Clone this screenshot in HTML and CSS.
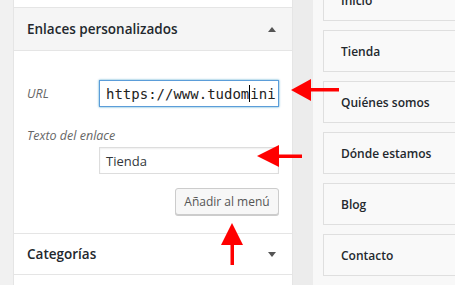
FILE: index.html
```html
<!DOCTYPE html>
<html lang="es">
<head>
    <meta charset="UTF-8">
    <meta name="viewport" content="width=device-width, initial-scale=1.0">
    <title>Menús</title>
    <link rel="stylesheet" href="styles.css">
</head>
<body>
    <div class="gutter"></div>

    <div class="panel">
        <div class="panel-top"></div>
        <div class="section-head open">
            <span>Enlaces personalizados</span>
            <span class="toggle up"></span>
        </div>
        <div class="section-body">
            <div class="field-row">
                <label class="field-label">URL</label>
                <div class="text-input focused mono">https://www.tudom<span class="caret"></span>ini</div>
            </div>
            <label class="field-label block">Texto del enlace</label>
            <div class="field-row">
                <span class="field-label"></span>
                <div class="text-input">Tienda</div>
            </div>
            <div class="actions">
                <button class="button">Añadir al menú</button>
            </div>
        </div>
        <div class="section-head">
            <span>Categorías</span>
            <span class="toggle down"></span>
        </div>
    </div>

    <div class="stripe"></div>

    <div class="menu">
        <div class="menu-item">Inicio</div>
        <div class="menu-item">Tienda</div>
        <div class="menu-item">Quiénes somos</div>
        <div class="menu-item">Dónde estamos</div>
        <div class="menu-item">Blog</div>
        <div class="menu-item">Contacto</div>
    </div>

    <!-- red arrows drawn on top of the screenshot -->
    <svg class="arrows" width="455" height="285" viewBox="0 0 455 285">
        <polygon points="291,90 311,79 311,101" fill="#f00"/>
        <rect x="310" y="88" width="29" height="3.5" fill="#f00"/>

        <polygon points="257,156 279,145 279,167" fill="#f00"/>
        <rect x="278" y="154.5" width="24" height="3.5" fill="#f00"/>

        <polygon points="232,223 221,245 243,245" fill="#f00"/>
        <rect x="230.5" y="244" width="3.5" height="21" fill="#f00"/>
    </svg>
</body>
</html>
```

FILE: styles.css
```css
body {
    margin: 0;
    width: 455px;
    height: 285px;
    overflow: hidden;
    display: flex;
    position: relative;
    font-family: "Open Sans", sans-serif;
    background-color: #f1f1f1;
    color: #23282d;
}
.gutter {
    width: 13px;
    background-color: #f1f1f1;
}
.panel {
    width: 278px;
    background: white;
    border-left: 1px solid #e5e5e5;
    border-right: 1px solid #e5e5e5;
}
.panel-top {
    height: 7px;
}
.section-head {
    height: 42px;
    display: flex;
    align-items: center;
    justify-content: space-between;
    padding: 0 16px 0 13px;
    font-size: 13.5px;
    font-weight: 600;
    border-top: 1px solid #e5e5e5;
    border-bottom: 1px solid #e5e5e5;
    background-color: white;
    box-sizing: border-box;
}
.section-head.open {
    background-color: #f5f5f5;
    height: 44px;
}
.toggle {
    width: 0;
    height: 0;
    border-left: 4px solid transparent;
    border-right: 4px solid transparent;
}
.toggle.up {
    border-bottom: 5px solid #555;
}
.toggle.down {
    border-top: 5px solid #555;
}
.section-body {
    padding: 29px 13px 17px 13px;
    height: 182px;
    box-sizing: border-box;
}
.field-row {
    display: flex;
    align-items: center;
}
.field-label {
    width: 72px;
    flex-shrink: 0;
    font-size: 12.5px;
    font-style: italic;
    color: #666;
}
.field-label.block {
    display: block;
    width: auto;
    margin: 21px 0 3px 0;
    line-height: 16px;
}
.text-input {
    width: 180px;
    height: 27px;
    box-sizing: border-box;
    border: 1px solid #ddd;
    box-shadow: inset 0 1px 2px rgba(0, 0, 0, 0.07);
    padding: 0 6px;
    display: flex;
    align-items: center;
    font-size: 13px;
    color: #32373c;
    white-space: nowrap;
    overflow: hidden;
}
.text-input.focused {
    border-color: #5b9dd9;
    box-shadow: 0 0 2px rgba(30, 140, 190, 0.8);
}
.text-input.mono {
    font-family: "DejaVu Sans Mono", monospace;
    font-size: 14px;
    color: #222;
}
.caret {
    display: inline-block;
    width: 0;
    height: 17px;
    border-left: 1px solid #000;
}
.actions {
    display: flex;
    justify-content: flex-end;
    margin-top: 14px;
}
.button {
    font-family: "Open Sans", sans-serif;
    font-size: 12px;
    color: #555;
    height: 27px;
    width: 104px;
    padding: 0;
    background-color: #f7f7f7;
    border: 1px solid #ccc;
    border-radius: 3px;
    box-shadow: 0 1px 0 #ccc;
    cursor: pointer;
}
.stripe {
    width: 20px;
    background-color: #ececec;
}
.menu {
    flex: 1;
    padding-left: 10px;
    background-color: #f8f8f8;
    margin-top: -21px;
}
.menu-item {
    height: 42px;
    box-sizing: border-box;
    margin-bottom: 9px;
    margin-right: -20px;
    padding-left: 17px;
    display: flex;
    align-items: center;
    font-size: 12px;
    font-weight: 600;
    background-color: #f9f9f9;
    border: 1px solid #dfdfdf;
}
.arrows {
    position: absolute;
    left: 0;
    top: 0;
}
```
